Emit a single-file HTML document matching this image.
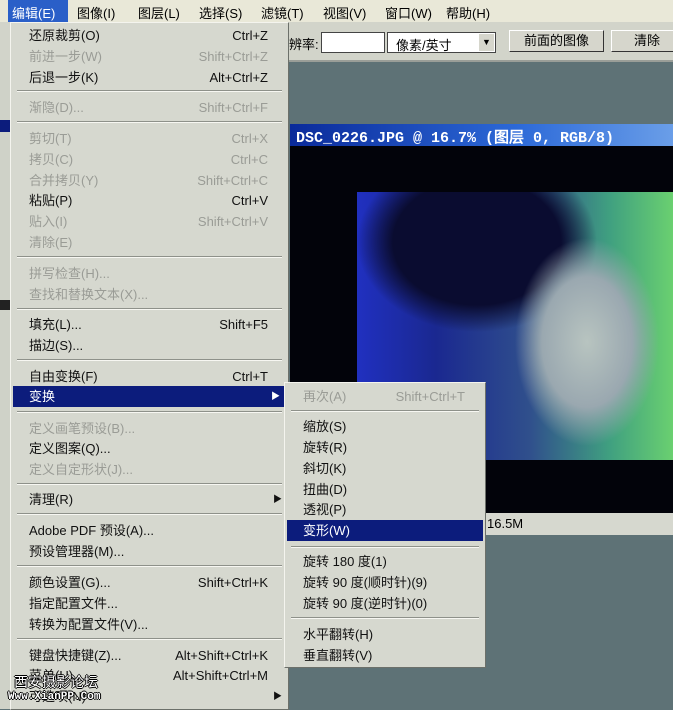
<!DOCTYPE html>
<html><head><meta charset="utf-8"><style>
body{margin:0;width:673px;height:709px;overflow:hidden;position:relative;background:#5e7276;font-family:"Liberation Sans","Noto Sans CJK SC",sans-serif;font-size:13px}
.a{position:absolute}
.menu{background:#d6d8cf;border:1px solid #f4f4ee;border-right-color:#6c706a;border-bottom-color:#6c706a}
.it{position:absolute;left:0;right:0;height:21px;line-height:21px;color:#111}
.it .l{position:absolute;left:18px}
.it .r{position:absolute;right:20px}
.d{color:#9a9c96}
.hl{background:#0c1c7c;color:#fff}
.sep{position:absolute;left:6px;right:6px;height:0;border-top:1px solid #8e918a;border-bottom:1px solid #f7f7f2}
.mb span{position:absolute;top:3px}
.btn{position:absolute;background:#d6d6cc;border:1px solid #fff;border-right-color:#333;border-bottom-color:#333;text-align:center;line-height:20px}
</style></head><body>
<div class="a mb" style="left:0;top:0;width:673px;height:22px;background:#e9e8d8">
<div class="a" style="left:8px;top:0;width:60px;height:22px;background:#2a5fc8"></div>
<span style="left:12px;color:#fff">编辑(E)</span>
<span style="left:77px">图像(I)</span><span style="left:138px">图层(L)</span><span style="left:199px">选择(S)</span><span style="left:261px">滤镜(T)</span><span style="left:323px">视图(V)</span><span style="left:385px">窗口(W)</span><span style="left:446px">帮助(H)</span>
</div>
<div class="a" style="left:0;top:22px;width:673px;height:38px;background:#d2d4ca;border-bottom:2px solid #9a9e98"></div>
<div class="a" style="left:289px;top:34px">辨率:</div>
<div class="a" style="left:321px;top:32px;width:62px;height:19px;background:#fff;border:1px solid #444"></div>
<div class="a" style="left:387px;top:32px;width:107px;height:19px;background:#fff;border:1px solid #444"><span style="position:absolute;left:8px;top:2px">像素/英寸</span><div style="position:absolute;right:1px;top:1px;width:15px;height:17px;background:#d6d6cc;font-size:9px;text-align:center;line-height:17px">▼</div></div>
<div class="btn" style="left:509px;top:30px;width:93px;height:20px">前面的图像</div>
<div class="btn" style="left:611px;top:30px;width:70px;height:20px">清除</div>
<div class="a" style="left:0;top:60px;width:10px;height:649px;background:#cfd2c8"></div>
<div class="a" style="left:0;top:120px;width:10px;height:12px;background:#0c1c7c"></div>
<div class="a" style="left:0;top:300px;width:10px;height:10px;background:#222"></div>
<div class="a" style="left:290px;top:124px;width:383px;height:22px;background:linear-gradient(90deg,#0a2a9a,#2d6ad8 60%,#6a9ee8)"></div>
<div class="a" style="left:296px;top:126px;color:#fff;font-family:'Liberation Mono',monospace;font-weight:bold;font-size:15px">DSC_0226.JPG @ 16.7% (图层 0, RGB/8)</div>
<div class="a" style="left:290px;top:146px;width:383px;height:367px;background:#02030a"></div>
<div class="a" style="left:357px;top:192px;width:316px;height:268px;background:radial-gradient(ellipse 90px 130px at 230px 150px,#b8c4c0 0%,#9aa8b0 50%,transparent 80%),radial-gradient(ellipse 120px 90px at 120px 50px,#0a0c30 0%,#0a0c30 70%,transparent 100%),linear-gradient(90deg,#2030c0 0%,#1a2890 25%,#30508c 55%,#40a080 80%,#6ad070 100%)"></div>
<div class="a" style="left:290px;top:513px;width:383px;height:22px;background:#d6d8cf"></div>
<div class="a" style="left:487px;top:516px">16.5M</div>
<div class="a menu" style="left:10px;top:22px;width:277px;height:686px">
<div class="it" style="top:2px"><span class="l">还原裁剪(O)</span><span class="r">Ctrl+Z</span></div>
<div class="it d" style="top:23px"><span class="l">前进一步(W)</span><span class="r">Shift+Ctrl+Z</span></div>
<div class="it" style="top:44px"><span class="l">后退一步(K)</span><span class="r">Alt+Ctrl+Z</span></div>
<div class="sep" style="top:67px"></div>
<div class="it d" style="top:74px"><span class="l">渐隐(D)...</span><span class="r">Shift+Ctrl+F</span></div>
<div class="sep" style="top:98px"></div>
<div class="it d" style="top:105px"><span class="l">剪切(T)</span><span class="r">Ctrl+X</span></div>
<div class="it d" style="top:126px"><span class="l">拷贝(C)</span><span class="r">Ctrl+C</span></div>
<div class="it d" style="top:147px"><span class="l">合并拷贝(Y)</span><span class="r">Shift+Ctrl+C</span></div>
<div class="it" style="top:167px"><span class="l">粘贴(P)</span><span class="r">Ctrl+V</span></div>
<div class="it d" style="top:188px"><span class="l">贴入(I)</span><span class="r">Shift+Ctrl+V</span></div>
<div class="it d" style="top:209px"><span class="l">清除(E)</span></div>
<div class="sep" style="top:233px"></div>
<div class="it d" style="top:240px"><span class="l">拼写检查(H)...</span></div>
<div class="it d" style="top:261px"><span class="l">查找和替换文本(X)...</span></div>
<div class="sep" style="top:285px"></div>
<div class="it" style="top:291px"><span class="l">填充(L)...</span><span class="r">Shift+F5</span></div>
<div class="it" style="top:312px"><span class="l">描边(S)...</span></div>
<div class="sep" style="top:336px"></div>
<div class="it" style="top:343px"><span class="l">自由变换(F)</span><span class="r">Ctrl+T</span></div>
<div class="it hl" style="top:363px;left:2px;right:2px"><span class="l" style="left:16px">变换</span><span style="position:absolute;right:6px;font-size:9px">▶</span></div>
<div class="sep" style="top:388px"></div>
<div class="it d" style="top:395px"><span class="l">定义画笔预设(B)...</span></div>
<div class="it" style="top:415px"><span class="l">定义图案(Q)...</span></div>
<div class="it d" style="top:436px"><span class="l">定义自定形状(J)...</span></div>
<div class="sep" style="top:460px"></div>
<div class="it" style="top:466px"><span class="l">清理(R)</span><span style="position:absolute;right:6px;font-size:9px">▶</span></div>
<div class="sep" style="top:490px"></div>
<div class="it" style="top:497px"><span class="l">Adobe PDF 预设(A)...</span></div>
<div class="it" style="top:518px"><span class="l">预设管理器(M)...</span></div>
<div class="sep" style="top:542px"></div>
<div class="it" style="top:549px"><span class="l">颜色设置(G)...</span><span class="r">Shift+Ctrl+K</span></div>
<div class="it" style="top:570px"><span class="l">指定配置文件...</span></div>
<div class="it" style="top:591px"><span class="l">转换为配置文件(V)...</span></div>
<div class="sep" style="top:615px"></div>
<div class="it" style="top:622px"><span class="l">键盘快捷键(Z)...</span><span class="r">Alt+Shift+Ctrl+K</span></div>
<div class="it" style="top:642px"><span class="l">菜单(U)...</span><span class="r">Alt+Shift+Ctrl+M</span></div>
<div class="it" style="top:663px"><span class="l">可选项(N)</span><span style="position:absolute;right:6px;font-size:9px">▶</span></div>
</div>
<div class="a menu" style="left:284px;top:382px;width:200px;height:284px">
<div class="it d" style="top:3px"><span class="l">再次(A)</span><span class="r">Shift+Ctrl+T</span></div>
<div class="sep" style="top:27px"></div>
<div class="it" style="top:33px"><span class="l">缩放(S)</span></div>
<div class="it" style="top:54px"><span class="l">旋转(R)</span></div>
<div class="it" style="top:75px"><span class="l">斜切(K)</span></div>
<div class="it" style="top:96px"><span class="l">扭曲(D)</span></div>
<div class="it" style="top:116px"><span class="l">透视(P)</span></div>
<div class="it hl" style="top:137px;left:2px;right:2px"><span class="l" style="left:16px">变形(W)</span></div>
<div class="sep" style="top:163px"></div>
<div class="it" style="top:168px"><span class="l">旋转 180 度(1)</span></div>
<div class="it" style="top:189px"><span class="l">旋转 90 度(顺时针)(9)</span></div>
<div class="it" style="top:210px"><span class="l">旋转 90 度(逆时针)(0)</span></div>
<div class="sep" style="top:234px"></div>
<div class="it" style="top:241px"><span class="l">水平翻转(H)</span></div>
<div class="it" style="top:262px"><span class="l">垂直翻转(V)</span></div>
</div>
<div class="a" style="left:14px;top:672px;color:#fff;font-size:14px;text-shadow:1px 0 #000,-1px 0 #000,0 1px #000,0 -1px #000">西安摄影论坛</div>
<div class="a" style="left:8px;top:691px;color:#fff;font-size:11px;font-weight:bold;font-family:'Liberation Mono',monospace;text-shadow:1px 0 #000,-1px 0 #000,0 1px #000,0 -1px #000">Www.XianPP.Com</div>
</body></html>
